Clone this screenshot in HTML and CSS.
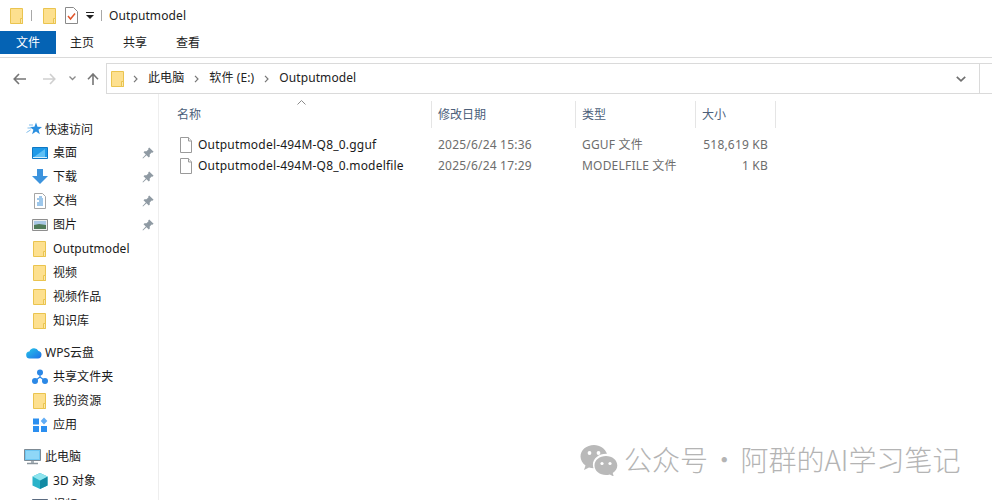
FILE: index.html
```html
<!DOCTYPE html>
<html lang="zh">
<head>
<meta charset="utf-8">
<title>Outputmodel</title>
<link rel="stylesheet" href="styles.css">
</head>
<body>
<svg class="defs" width="0" height="0" aria-hidden="true">
  <defs>
    <symbol id="folder" viewBox="0 0 13 16">
      <path d="M.5.5h12v15H.5z" fill="#fde08f" stroke="#eac44f"/>
      <path d="M10.500 10.500h2v5h-2z" fill="#fbe8ae" stroke="#eac44f"/>
    </symbol>
    <symbol id="pin" viewBox="0 0 12 12">
      <path d="M7.200.4l4.400 4.400-1.200 1-.7-.3-2 2 .1 2-1 1-2.300-2.300L1 11.500l-.5-.5L3.800 7.500 1.500 5.200l1-1 2 .1 2-2-.3-.7z" fill="#8f9aa3"/>
    </symbol>
    <symbol id="doc" viewBox="0 0 12 16">
      <path d="M.5.5h8l3 3.500v11.500H.5z" fill="#fff" stroke="#9a9a9a"/>
      <path d="M8.500.5v3.500h3" fill="#f2f2f2" stroke="#9a9a9a"/>
    </symbol>
  </defs>
</svg>

<div class="window">
  <header class="titlebar">
    <svg class="ti ti-folder"><use href="#folder"/></svg>
    <span class="tsep"></span>
    <svg class="ti ti-folder2"><use href="#folder"/></svg>
    <svg class="ti-check" viewBox="0 0 13 17" width="13" height="17">
      <path d="M.5.500h8l4 4v12H.5z" fill="#fff" stroke="#8a8a8a"/>
      <path d="M3 9l2.500 3L10 6.500" fill="none" stroke="#e0552b" stroke-width="1.500"/>
    </svg>
    <svg class="ti-drop" viewBox="0 0 8 7" width="8" height="7">
      <path d="M0 0h8v1H0zM0 3h8L4 7z" fill="#222"/>
    </svg>
    <span class="tsep tsep2"></span>
    <span class="ttext">Outputmodel</span>
  </header>

  <nav class="tabs">
    <span class="tab tab-file">文件</span>
    <span class="tab tab-home">主页</span>
    <span class="tab tab-share">共享</span>
    <span class="tab tab-view">查看</span>
  </nav>

  <div class="navbar">
    <div class="navbtns">
      <svg class="nav-back" viewBox="0 0 13 12" width="13" height="12"><path d="M6 1L1.200 6 6 11M1.500 6H13" fill="none" stroke="#767676" stroke-width="1.600"/></svg>
      <svg class="nav-fwd" viewBox="0 0 13 12" width="13" height="12"><path d="M7 1l4.800 5L7 11M11.500 6H0" fill="none" stroke="#cfcfcf" stroke-width="1.600"/></svg>
      <svg class="nav-recent" viewBox="0 0 7 5" width="7" height="5"><path d="M.5.500l3 3 3-3" fill="none" stroke="#8a8a8a" stroke-width="1.300"/></svg>
      <svg class="nav-up" viewBox="0 0 12 12" width="12" height="12"><path d="M1 6.200L6 1l5 5.200M6 1.500V12" fill="none" stroke="#767676" stroke-width="1.600"/></svg>
    </div>
    <div class="address">
      <svg class="addr-folder"><use href="#folder"/></svg>
      <svg class="crumb-sep" viewBox="0 0 5 8" width="5" height="8"><path d="M1 .8L4 4 1 7.200" fill="none" stroke="#777" stroke-width="1.200"/></svg>
      <span class="crumb">此电脑</span>
      <svg class="crumb-sep" viewBox="0 0 5 8" width="5" height="8"><path d="M1 .8L4 4 1 7.200" fill="none" stroke="#777" stroke-width="1.200"/></svg>
      <span class="crumb">软件 (E:)</span>
      <svg class="crumb-sep" viewBox="0 0 5 8" width="5" height="8"><path d="M1 .8L4 4 1 7.200" fill="none" stroke="#777" stroke-width="1.200"/></svg>
      <span class="crumb">Outputmodel</span>
      <svg class="addr-chevron" viewBox="0 0 10 6" width="10" height="6"><path d="M.8.800L5 4.800 9.200.8" fill="none" stroke="#707070" stroke-width="1.700"/></svg>
    </div>
    <div class="search"></div>
  </div>

  <div class="body">
    <aside class="sidebar">
      <div class="side-head side-first">
        <svg class="h-icon" viewBox="0 0 16 16" width="16" height="16"><path d="M10 1.500l1.500 4.200 4.500.2-3.500 2.900 1.300 4.400L10 10.600l-3.900 2.600 1.300-4.400-3.500-2.900 4.500-.2z" fill="#2a8fe0"/><path d="M3 4h4M1.500 7h4M.5 11.500L4.500 9" stroke="#7fbdec" stroke-width="1"/></svg>
        <span>快速访问</span>
      </div>
      <div class="side-item">
        <svg class="s-icon" viewBox="0 0 16 16"><path d="M.5 2.500h15v11H.5z" fill="#1f9ae8" stroke="#0f78c4"/><path d="M2 12l11-8v8z" fill="#5fc0f5"/><path d="M1 12.500h14" stroke="#d8effc"/></svg>
        <span class="s-label">桌面</span><svg class="pin"><use href="#pin"/></svg>
      </div>
      <div class="side-item">
        <svg class="s-icon" viewBox="0 0 16 16"><path d="M5 0h6v7h5l-8 8-8-8h5z" fill="#3c93dd"/></svg>
        <span class="s-label">下载</span><svg class="pin"><use href="#pin"/></svg>
      </div>
      <div class="side-item">
        <svg class="s-icon" viewBox="0 0 16 16"><path d="M2.500.5h8l3 3v12h-11z" fill="#fff" stroke="#a5a5a5"/><path d="M7 4h3M5 6h6M7 8h4M5 10h6M5 12h6" stroke="#3d8fd6"/></svg>
        <span class="s-label">文档</span><svg class="pin"><use href="#pin"/></svg>
      </div>
      <div class="side-item">
        <svg class="s-icon" viewBox="0 0 16 16"><path d="M.5 2.500h15v11H.5z" fill="#eee" stroke="#8e8e8e"/><path d="M2 4h12v4H2z" fill="#a9c7e4"/><path d="M2 8l5-1 7 1v4H2z" fill="#4f7a58"/></svg>
        <span class="s-label">图片</span><svg class="pin"><use href="#pin"/></svg>
      </div>
      <div class="side-item"><svg class="s-icon s-folder"><use href="#folder"/></svg><span class="s-label">Outputmodel</span></div>
      <div class="side-item"><svg class="s-icon s-folder"><use href="#folder"/></svg><span class="s-label">视频</span></div>
      <div class="side-item"><svg class="s-icon s-folder"><use href="#folder"/></svg><span class="s-label">视频作品</span></div>
      <div class="side-item"><svg class="s-icon s-folder"><use href="#folder"/></svg><span class="s-label">知识库</span></div>

      <div class="side-head side-gap">
        <svg class="h-icon" viewBox="0 0 16 16" width="16" height="16"><defs><linearGradient id="cloud" x1="0" y1="0" x2="1" y2="1"><stop offset="0" stop-color="#25c6e8"/><stop offset="1" stop-color="#1f6fe8"/></linearGradient></defs><path d="M4 13.500a3.500 3.500 0 0 1-.6-7A5 5 0 0 1 12.500 6a3.800 3.800 0 0 1-.5 7.500z" fill="url(#cloud)"/></svg>
        <span>WPS云盘</span>
      </div>
      <div class="side-item">
        <svg class="s-icon" viewBox="0 0 16 16"><circle cx="8" cy="3.500" r="3" fill="#2b88e6"/><circle cx="3" cy="12" r="3" fill="#2b88e6"/><circle cx="13" cy="12" r="3" fill="#2b88e6"/><path d="M8 5v3M8 8l-4 3M8 8l4 3" stroke="#2b88e6" stroke-width="1.200"/></svg>
        <span class="s-label">共享文件夹</span>
      </div>
      <div class="side-item"><svg class="s-icon s-folder"><use href="#folder"/></svg><span class="s-label">我的资源</span></div>
      <div class="side-item">
        <svg class="s-icon" viewBox="0 0 16 16"><path d="M1 1.500h6v6H1zM1 9h6v6H1zM9 9h6v6H9z" fill="#2b8ff0"/><path d="M12 .5l3.300 3.500L12 7.500 8.700 4z" fill="#62adf5"/></svg>
        <span class="s-label">应用</span>
      </div>

      <div class="side-head side-gap">
        <svg class="h-icon h-pc" viewBox="0 0 17 16" width="17" height="16"><path d="M.5.5h16v11H.5z" fill="#6cc6f2" stroke="#7d8a94"/><path d="M2 2h13v8H2z" fill="#8fd7f7"/><path d="M7 12h3v2H7z" fill="#a9b2b9"/><path d="M3 14.500h11" stroke="#8b959d" stroke-width="1.500"/></svg>
        <span>此电脑</span>
      </div>
      <div class="side-item">
        <svg class="s-icon" viewBox="0 0 16 16"><path d="M8 0l7.500 3.500v9L8 16 .5 12.500v-9z" fill="#2bb3c9"/><path d="M8 7.500L15.500 3.500v9L8 16z" fill="#128aa3"/><path d="M8 0l7.500 3.500L8 7.500.5 3.500z" fill="#8ee4ee"/></svg>
        <span class="s-label">3D 对象</span>
      </div>
      <div class="side-item">
        <svg class="s-icon" viewBox="0 0 16 16"><path d="M.5 2.500h15v11H.5z" fill="#3f5f92" stroke="#5a6b80"/></svg>
        <span class="s-label">视频</span>
      </div>
    </aside>

    <main class="files">
      <div class="sort-mark"><svg viewBox="0 0 9 5" width="9" height="5"><path d="M.5 4.500l4-4 4 4" fill="none" stroke="#8a8a8a"/></svg></div>
      <div class="row head">
        <span class="col c-name">名称</span>
        <span class="col c-date">修改日期</span>
        <span class="col c-type">类型</span>
        <span class="col c-size">大小</span>
      </div>
      <div class="row file">
        <span class="col c-name"><svg class="f-icon"><use href="#doc"/></svg><span class="f-name">Outputmodel-494M-Q8_0.gguf</span></span>
        <span class="col c-date">2025/6/24 15:36</span>
        <span class="col c-type">GGUF 文件</span>
        <span class="col c-size">518,619 KB</span>
      </div>
      <div class="row file">
        <span class="col c-name"><svg class="f-icon"><use href="#doc"/></svg><span class="f-name">Outputmodel-494M-Q8_0.modelfile</span></span>
        <span class="col c-date">2025/6/24 17:29</span>
        <span class="col c-type">MODELFILE 文件</span>
        <span class="col c-size">1 KB</span>
      </div>
    </main>
  </div>
</div>

<div class="watermark">
  <svg class="wm-icon" viewBox="0 0 38 32" width="38" height="32">
    <path d="M14 1C6.500 1 .5 6 .5 12.500c0 3.600 2 6.800 5 9L4 26l5-2.600c1.500.5 3 .7 4.500.8-.4-1.200-.6-2.400-.6-3.500C12.900 14.500 19 9.500 27 9.800 25.300 4.800 20 1 14 1z" fill="#b9b9b9"/>
    <path d="M26 12c-6.300 0-11.500 4.100-11.500 9.500S19.700 31 26 31c1.300 0 2.600-.2 3.800-.6l4 2.200-1.100-3.600c2.800-1.800 4.600-4.600 4.600-7.500C37.300 16.100 32.300 12 26 12z" fill="#b9b9b9"/>
    <circle cx="9.500" cy="9" r="1.900" fill="#fff"/><circle cx="18.500" cy="9" r="1.900" fill="#fff"/>
    <circle cx="22" cy="19.500" r="1.600" fill="#fff"/><circle cx="30" cy="19.500" r="1.600" fill="#fff"/>
  </svg>
  <span class="wm-text">公众号 · 阿群的AI学习笔记</span>
</div>
</body>
</html>
```

FILE: styles.css
```css
* { box-sizing: border-box; }
html, body { margin: 0; height: 100%; }
body {
  position: relative;
  width: 992px;
  height: 500px;
  overflow: hidden;
  background: #fff;
  color: #1a1a1a;
  font: 12px/16px "Noto Sans", "Noto Sans CJK SC", sans-serif;
}
.defs { position: absolute; }
svg { display: block; flex: none; }

.window { display: flex; flex-direction: column; height: 500px; }

/* title bar */
.titlebar { display: flex; align-items: center; height: 31px; padding-left: 10px; }
.ti { width: 13px; height: 16px; }
.tsep { width: 1px; height: 11px; margin-left: 8px; background: #a8a8a8; }
.ti-folder2 { margin-left: 11px; }
.ti-check { margin-left: 9px; }
.ti-drop { margin-left: 8px; }
.tsep2 { margin-left: 7px; }
.ttext { margin-left: 7px; font-size: 12px; letter-spacing: .1px; color: #222; }

/* ribbon tabs */
.tabs { display: flex; height: 23px; align-items: center; }
.tab { display: block; height: 23px; line-height: 24px; text-align: center; color: #222; }
.tab-file { width: 56px; background: #0563b4; color: #fff; }
.tab-home { width: 52px; }
.tab-share { width: 54px; }
.tab-view { width: 52px; }

/* navigation bar */
.navbar {
  display: flex;
  height: 37px;
  margin-top: 3px;
  padding-top: 5px;
  border-top: 1px solid #dadada;
}
.navbtns { display: flex; align-items: center; width: 106px; padding-left: 13px; }
.nav-fwd { margin-left: 17px; }
.nav-recent { margin-left: 13px; }
.nav-up { margin-left: 11px; }
.address {
  display: flex;
  align-items: center;
  width: 874px;
  height: 31px;
  padding-left: 4px;
  border: 1px solid #dadada;
  color: #222;
}
.addr-folder { width: 13px; height: 16px; margin-right: -1px; }
.crumb-sep { margin: 0 10px 0 10px; }
.crumb { white-space: nowrap; letter-spacing: .1px; padding-bottom: 2px; }
.addr-chevron { margin-left: auto; margin-right: 13px; }
.search { flex: 1; height: 31px; border-top: 1px solid #dadada; border-bottom: 1px solid #dadada; }

/* main region */
.body { display: flex; flex: 1; min-height: 0; }

.sidebar {
  flex: none;
  width: 159px;
  padding-top: 23px;
  overflow: hidden;
  border-right: 1px solid #eeeeee;
}
.side-head { display: flex; align-items: center; height: 24px; padding-left: 26px; color: #222; }
.side-head span { margin-left: 3px; white-space: nowrap; }
.side-first span { padding-top: 2px; }
.h-pc { margin-left: -2px; margin-right: 1px; }
.side-gap { margin-top: 8px; }
.side-item { display: flex; align-items: center; height: 24px; padding-left: 32px; color: #1a1a1a; }
.s-icon { width: 16px; height: 16px; }
.s-folder { width: 13px; height: 16px; margin: 0 2px 0 1px; }
.s-label { margin-left: 5px; flex: 1; white-space: nowrap; letter-spacing: .05px; }
.pin { width: 12px; height: 12px; margin-right: 4px; }

/* file list */
.files { position: relative; flex: 1; padding-top: 6px; padding-left: 12px; }
.sort-mark { position: absolute; left: 138px; top: 6px; }
.row { display: grid; grid-template-columns: 261px 144px 120px 80px; align-items: center; }
.head { height: 28px; margin-bottom: 6px; color: #4c607a; }
.head .col { display: block; height: 27px; line-height: 27px; padding-left: 6px; border-right: 1px solid #e5e5e5; }
.file { height: 21px; color: #6d6d6d; letter-spacing: .2px; }
.file .col { padding-left: 6px; white-space: nowrap; }
.file .c-name { display: flex; align-items: center; padding-left: 9px; color: #1a1a1a; }
.file .c-size { padding-left: 0; padding-right: 8px; text-align: right; }
.f-icon { width: 12px; height: 16px; }
.f-name { margin-left: 6px; }

/* watermark */
.watermark {
  position: absolute;
  left: 580px;
  top: 443px;
  display: flex;
  align-items: center;
  height: 33px;
  color: #b4b4b4;
}
.wm-icon { width: 38px; height: 32px; }
.wm-text { margin-left: 6px; font-size: 28px; line-height: 33px; word-spacing: -4px; white-space: nowrap; font-family: "Noto Sans CJK SC", sans-serif; font-weight: 300; }
```
